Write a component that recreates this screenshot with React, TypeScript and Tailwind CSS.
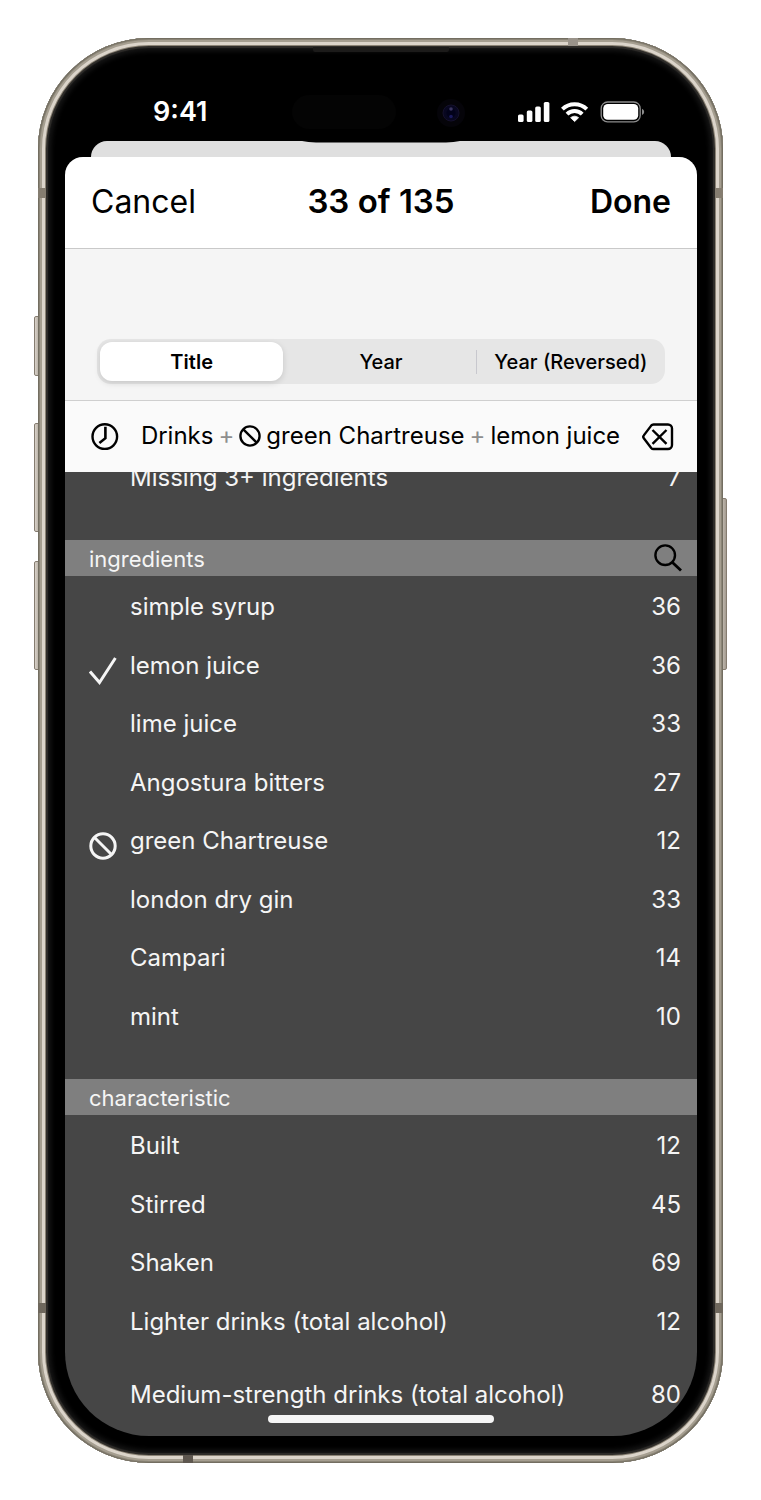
import { useState } from "react";
import type { ReactNode } from "react";

type Mark = "include" | "exclude";
type Row = { label: string; count: number; mark?: Mark };

const ingredients: Row[] = [
  { label: "simple syrup", count: 36 },
  { label: "lemon juice", count: 36, mark: "include" },
  { label: "lime juice", count: 33 },
  { label: "Angostura bitters", count: 27 },
  { label: "green Chartreuse", count: 12, mark: "exclude" },
  { label: "london dry gin", count: 33 },
  { label: "Campari", count: 14 },
  { label: "mint", count: 10 },
];

const characteristics: Row[] = [
  { label: "Built", count: 12 },
  { label: "Stirred", count: 45 },
  { label: "Shaken", count: 69 },
  { label: "Lighter drinks (total alcohol)", count: 12 },
];

const sortOptions = ["Title", "Year", "Year (Reversed)"];

function BanIcon({ className }: { className: string }) {
  return (
    <svg viewBox="0 0 28 28" className={className} fill="none" stroke="currentColor" strokeWidth="3" aria-hidden="true">
      <circle cx="14" cy="14" r="12.2" />
      <path d="M5.5 5.5 22.5 22.5" />
    </svg>
  );
}

function CheckIcon() {
  return (
    <svg viewBox="0 0 28 28" className="size-7" fill="none" stroke="currentColor" strokeWidth="3" aria-hidden="true">
      <path d="M1 14.5 10.5 25.5 26.4 1" />
    </svg>
  );
}

function ClockIcon() {
  return (
    <svg viewBox="0 0 28 28" className="size-7" fill="none" stroke="currentColor" strokeWidth="2.4" aria-hidden="true">
      <circle cx="13.8" cy="13.6" r="12.3" />
      <path d="M14.4 3.8V15.2L8.4 20" strokeWidth="2.6" />
    </svg>
  );
}

function ClearIcon() {
  return (
    <svg viewBox="0 0 32 28" className="h-7 w-8" fill="none" stroke="currentColor" strokeWidth="2.4" strokeLinejoin="round" aria-hidden="true">
      <path d="M11.5 1.5H26a4 4 0 0 1 4 4V22a4 4 0 0 1-4 4H11.5a3 3 0 0 1-2.3-1.1L1.8 15.2a2.2 2.2 0 0 1 0-2.8L9.2 2.6a3 3 0 0 1 2.3-1.1Z" />
      <path d="M10.5 7 24.5 20.8M24.5 7 10.5 20.8" />
    </svg>
  );
}

function SearchIcon() {
  return (
    <svg viewBox="0 0 28 28" className="size-7" fill="none" stroke="currentColor" strokeWidth="2.4" aria-hidden="true">
      <circle cx="11.2" cy="11.2" r="9.8" />
      <path d="M18 18 27 26.6" strokeWidth="2.8" />
    </svg>
  );
}

function StatusIcons() {
  return (
    <svg viewBox="0 0 128 24" className="h-6 w-32" fill="#fff" aria-hidden="true">
      <rect x="1" y="14.4" width="5.6" height="7.6" rx="1.6" />
      <rect x="9.8" y="10.4" width="5.6" height="11.6" rx="1.6" />
      <rect x="18.2" y="6.4" width="5.6" height="15.6" rx="1.6" />
      <rect x="26.8" y="2" width="5.6" height="20" rx="1.6" />
      <g fill="none" stroke="#fff" strokeWidth="3.9">
        <path d="M45.4 9.2a17.4 17.4 0 0 1 24.4 0" />
        <path d="M50 14.2a10.7 10.7 0 0 1 15.2 0" />
      </g>
      <path d="M53.6 17.7a6 6 0 0 1 8 0L57.6 21.6Z" stroke="#fff" strokeWidth="0.8" strokeLinejoin="round" />
      <rect x="84.2" y="2" width="39" height="19.8" rx="6.4" fill="none" stroke="#8c8c8c" strokeWidth="1.3" />
      <rect x="86.2" y="4" width="35" height="15.8" rx="4.6" />
      <path d="M125 8.8q2.2 1 2.2 3.1t-2.2 3.1Z" fill="#8c8c8c" />
    </svg>
  );
}

function FilterRow({ row }: { row: Row }) {
  return (
    <li className="grid">
      <button type="button" aria-pressed={row.mark !== undefined} className="flex items-center pt-1 pr-4 pl-6 text-left">
        <span className="flex w-[41px] pt-2.5">
          {row.mark === "include" && <CheckIcon />}
          {row.mark === "exclude" && <BanIcon className="size-7" />}
        </span>
        <span className="flex-1">{row.label}</span>
        <span>{row.count}</span>
      </button>
    </li>
  );
}

function SectionHeader({ title, children }: { title: string; children?: ReactNode }) {
  return (
    <div className="flex h-9 items-center justify-between bg-[#7f7f7f] pr-[15px] pl-6">
      <h2 className="pt-px text-[22px]">{title}</h2>
      {children}
    </div>
  );
}

function SideButton({ className }: { className: string }) {
  return (
    <span
      aria-hidden="true"
      className={`absolute w-2 rounded-xs border border-[#857c70] bg-linear-to-r from-[#d8d1c8] to-[#a39b90] ${className}`}
    />
  );
}

export default function App() {
  const [sort, setSort] = useState("Title");

  return (
    <main className="min-h-screen bg-white p-[38px] font-['Inter',sans-serif]">
      <div className="relative">
        <SideButton className="top-[278px] -left-1 h-[60px]" />
        <SideButton className="top-[385px] -left-1 h-[109px]" />
        <SideButton className="top-[523px] -left-1 h-[109px]" />
        <SideButton className="top-[460px] -right-1 h-[172px]" />

        <div className="relative rounded-[111px] bg-black pr-[26px] pb-[27px] pl-[27px] shadow-[inset_0_0_0_1px_#736e61,inset_0_0_0_2px_#8a8476,inset_0_0_0_4px_#a59e90,inset_0_0_0_7px_#dbd4ca,inset_0_0_0_8px_#8b8375,inset_0_0_1px_10px_#2f2d2a,inset_0_0_5px_13px_#161616]">
          <span aria-hidden="true" className="absolute top-0 right-[145px] h-2 w-2.5 bg-[#9a938a]" />
          <span aria-hidden="true" className="absolute bottom-0 left-[145px] h-2 w-2.5 bg-[#5e574f]" />
          <span aria-hidden="true" className="absolute top-[150px] left-0 h-2.5 w-2 bg-[#857d70]" />
          <span aria-hidden="true" className="absolute top-[150px] right-0 h-2.5 w-2 bg-[#857d70]" />
          <span aria-hidden="true" className="absolute bottom-[150px] left-0 h-2.5 w-2 bg-[#6e675c]" />
          <span aria-hidden="true" className="absolute right-0 bottom-[150px] h-2.5 w-2 bg-[#6e675c]" />
          <span aria-hidden="true" className="absolute top-[9px] left-1/2 h-[5px] w-[136px] -translate-x-1/2 rounded-b-xs bg-[#1c1b1a]" />
          <span aria-hidden="true" className="absolute top-[57px] left-[254px] h-[34px] w-[104px] rounded-full bg-[#040404]" />

          <div className="flex h-[103px] items-center justify-between pt-11 pr-[52px] pl-[88px] text-white">
            <span className="text-[27px] leading-8 font-semibold">9:41</span>
            <StatusIcons />
          </div>
          <svg viewBox="0 0 30 30" className="absolute top-[60px] left-[398px] size-[30px]" aria-hidden="true">
            <circle cx="15" cy="15" r="14" fill="#050409" />
            <circle cx="15" cy="15" r="8" fill="#080720" stroke="#15112c" />
            <circle cx="15" cy="15" r="4.5" fill="#02021a" />
            <circle cx="15" cy="11" r="1.8" fill="#3a3560" />
            <circle cx="15" cy="18.5" r="1.8" fill="#1b1a5c" />
          </svg>

          <div className="mx-[26px] h-4 rounded-t-2xl bg-[#dfdfdf]">
            <svg viewBox="0 0 158 2" className="mx-auto h-0.5 w-[158px]" aria-hidden="true">
              <path d="M0 0H158Q152 1.4 144 1.4H14Q6 1.4 0 0Z" />
            </svg>
          </div>

          <div className="overflow-hidden rounded-t-[18px] rounded-b-[84px] bg-[#464646]">
            <header className="grid h-[92px] grid-cols-[1fr_auto_1fr] items-center border-b border-[#c9c9c9] bg-white px-[26px] pb-0.5 text-[32px] text-black">
              <button type="button" className="justify-self-start">Cancel</button>
              <h1 className="text-[33px] font-semibold">33 of 135</h1>
              <button type="button" className="justify-self-end font-semibold">Done</button>
            </header>

            <div className="flex h-[152px] items-end border-b border-[#cfcfcf] bg-[#f5f5f5] px-8 pb-4">
              <div role="group" aria-label="Sort order" className="grid h-[45px] flex-1 grid-cols-3 rounded-[14px] bg-[#e6e6e6] text-[20px] text-black">
                {sortOptions.map((option, i) => (
                  <button
                    key={option}
                    type="button"
                    aria-pressed={sort === option}
                    onClick={() => setSort(option)}
                    className={
                      sort === option
                        ? "m-[3px] rounded-xl bg-white font-semibold whitespace-nowrap shadow-[0_2px_6px_rgba(0,0,0,0.14)]"
                        : "flex items-center font-medium whitespace-nowrap"
                    }
                  >
                    {i === 2 && sort !== option && <span className="h-6 w-px bg-[#c8c8ce]" />}
                    <span className="flex-1">{option}</span>
                  </button>
                ))}
              </div>
            </div>

            <div className="flex h-[71px] items-center justify-between bg-[#fafafa] pr-[23px] pl-[26px] text-black">
              <button type="button" aria-label="Recent filters"><ClockIcon /></button>
              <p className="flex items-center gap-[5px] pb-0.5 text-[24px] whitespace-nowrap">
                <span>Drinks</span>
                <span className="text-[#8e8e8e]">+</span>
                <BanIcon className="size-[22px]" />
                <span>green Chartreuse</span>
                <span className="text-[#8e8e8e]">+</span>
                <span>lemon juice</span>
              </p>
              <button type="button" aria-label="Clear filters"><ClearIcon /></button>
            </div>

            <div className="text-[24px] leading-8 text-[#f5f5f5]">
              <div className="flex h-[68px] items-start overflow-hidden pr-4 pl-[65px]">
                <span className="-mt-2.5 flex-1">Missing 3+ ingredients</span>
                <span className="-mt-2.5">7</span>
              </div>

              <SectionHeader title="ingredients">
                <button type="button" aria-label="Search ingredients" className="text-black"><SearchIcon /></button>
              </SectionHeader>
              <ul className="grid min-h-[468px] auto-rows-fr">
                {ingredients.map((row) => <FilterRow key={row.label} row={row} />)}
              </ul>

              <div className="pt-[35px]">
                <SectionHeader title="characteristic" />
              </div>
              <ul className="grid min-h-[234px] auto-rows-fr">
                {characteristics.map((row) => <FilterRow key={row.label} row={row} />)}
              </ul>
              <ul className="grid min-h-[87px]">
                <FilterRow row={{ label: "Medium-strength drinks (total alcohol)", count: 80 }} />
              </ul>
            </div>
          </div>
          <span aria-hidden="true" className="absolute bottom-10 left-1/2 h-2 w-[226px] -translate-x-1/2 rounded-full bg-[#f5f5f5]" />
        </div>
      </div>
    </main>
  );
}
